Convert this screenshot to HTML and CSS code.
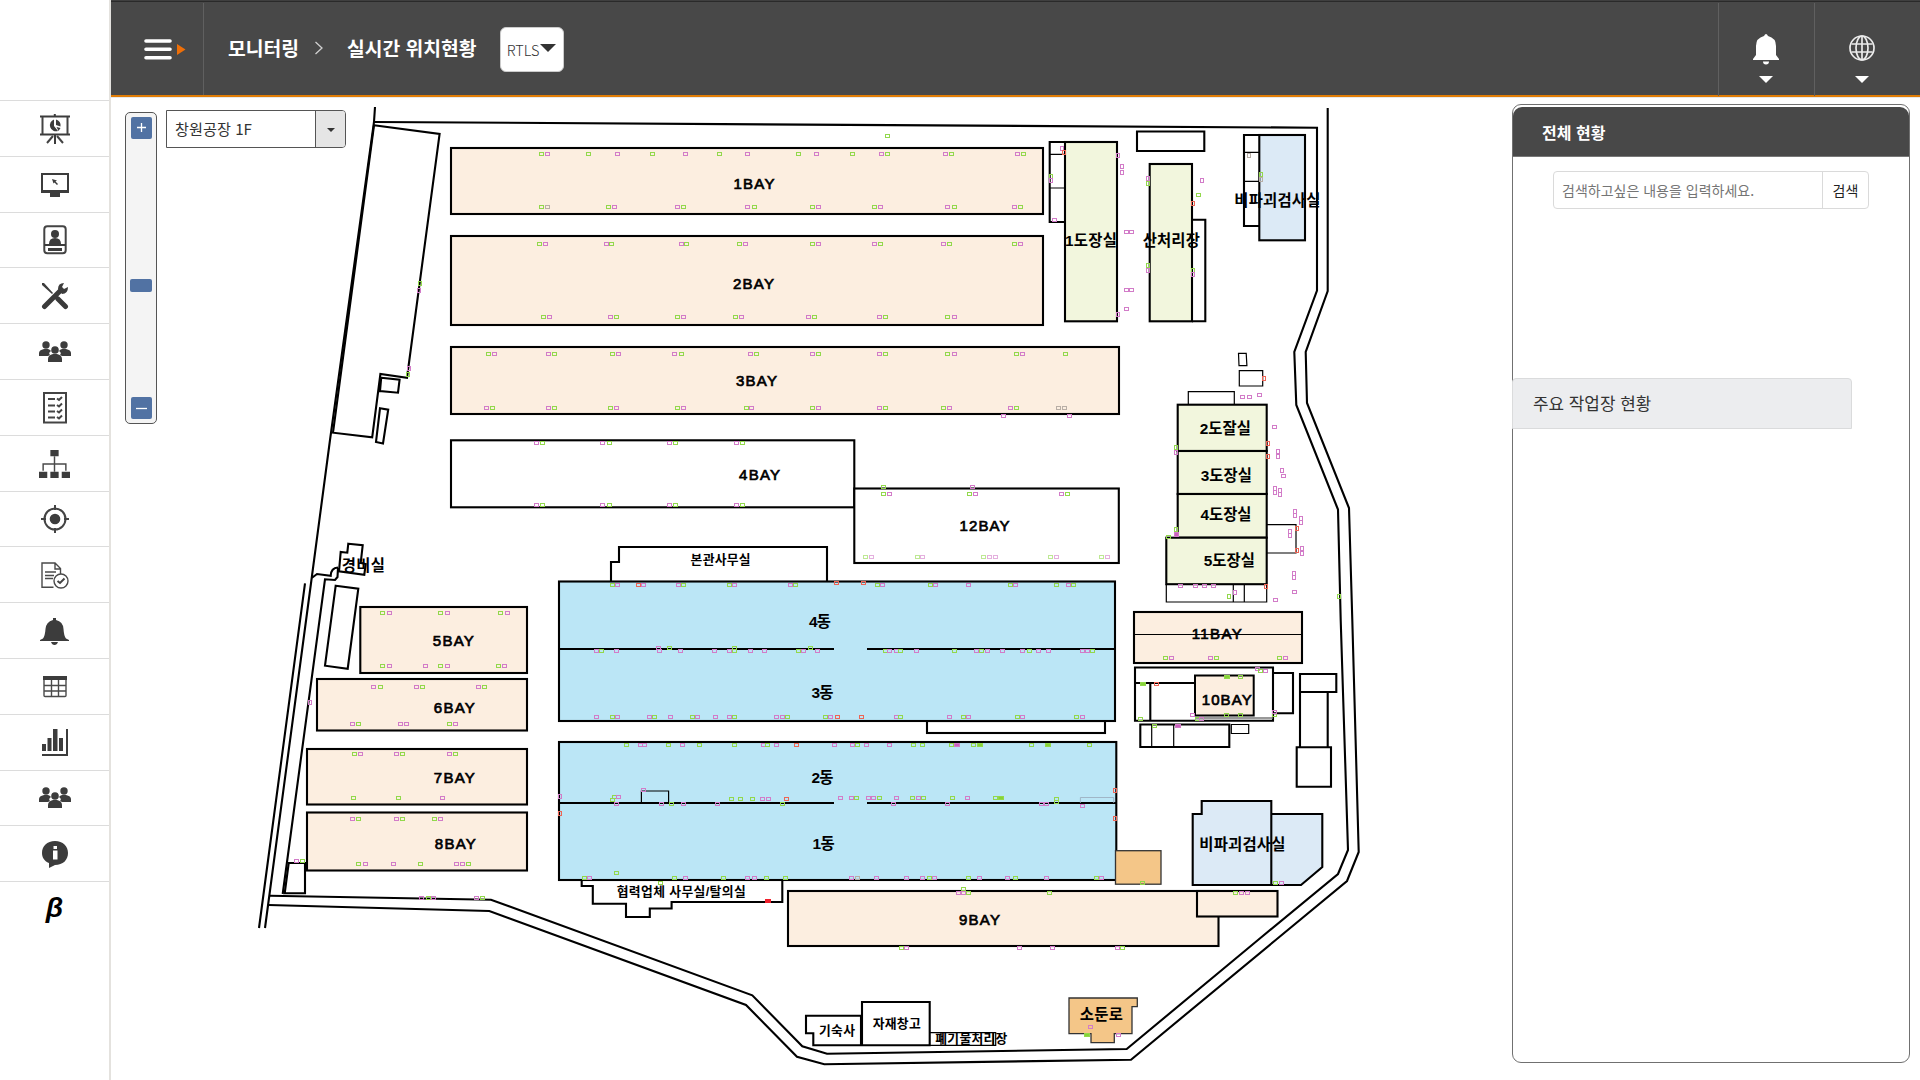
FILE: index.html
```html
<!DOCTYPE html>
<html lang="ko">
<head>
<meta charset="utf-8">
<title>실시간 위치현황</title>
<link rel="stylesheet" href="styles.css">
</head>
<body>
<svg class="defs" aria-hidden="true">
  <symbol id="people" viewBox="0 0 32 22">
    <circle cx="7" cy="4" r="3.7"/><circle cx="25" cy="4" r="3.7"/>
    <path d="M0 15v-3q0-3 5-4h4q2 .6 3 2q-3 2-1 4l-2 1zM32 15v-3q0-3-5-4h-4q-2 .6-3 2q3 2 1 4l2 1z"/>
    <circle cx="16" cy="9" r="3.8"/><path d="M9 21v-3q0-4 5-5h4q5 1 5 5v3z"/>
  </symbol>
</svg>
<nav class="side">
  <div class="logo"></div>
  <a class="item"><svg class="ic" viewBox="0 0 30 30" width="30" height="30"><path d="M0 1.500h30v2H0zM0 19.500h30v2H0zM13.800 0h2v2h-2zM14 21h2v9h-2z"/><path class="ln" d="M2.500 3v17M27.500 3v17M13 22l-6 7M17 22l6 7"/><path d="M14 5.500v6.500l4 5a6 6 0 1 1-4-11.500zM16 5.500a6 6 0 0 1 4.500 7l-4.500-1.500zM16.500 13l4 1-2 3z"/></svg></a>
  <a class="item"><svg class="ic" viewBox="0 0 28 24" width="28" height="24"><path fill-rule="evenodd" d="M0 0h28v20H19v4H9v-4H0zM2 2v15h24V2z"/><path d="M11 6l5 1.500-1.500 1 2.500 2.500-1 1-2.500-2.500-1 1z"/></svg></a>
  <a class="item"><svg class="ic" viewBox="0 0 24 30" width="24" height="30"><rect class="ln" x="1.300" y="1.300" width="21.400" height="27" rx="3"/><circle cx="12" cy="9" r="4"/><path d="M6 19q0-6 6-6t6 6zM1 19h22v2H1zM5 23h14v3H5z"/></svg></a>
  <a class="item"><svg class="ic" viewBox="0 0 28 28" width="28" height="28"><path d="M1 1l2 0 9 10-1 1L1 3z"/><path class="fat" d="M3.500 24.500L20 8M17 17l7.500 7.500"/><path d="M17 7q0-6 6-6l-2 4 2 2 4-2q0 7-6 7z"/></svg></a>
  <a class="item"><svg class="ic" width="32" height="22"><use href="#people"/></svg></a>
  <a class="item"><svg class="ic" viewBox="0 0 24 32" width="24" height="32"><rect class="ln" x="1" y="1" width="22" height="29.500"/><path class="ln" d="M5 7h7M5 13.500h7M5 19.500h7M5 25.500h7M14 6.500l2 1.500 3-3M14 13l2 1.500 3-3M14 19l2 1.500 3-3M14 25l2 1.500 3-3"/></svg></a>
  <a class="item"><svg class="ic" viewBox="0 0 30 27" width="31" height="28"><path d="M11 0h8v6h-8zM0 21h8v6H0zM11 21h8v6h-8zM22 21h8v6h-8z"/><path class="thin" d="M15 6v15M4 20v-6.500h22V20"/></svg></a>
  <a class="item"><svg class="ic" viewBox="0 0 28 28" width="28" height="28"><circle class="ln" cx="14" cy="14" r="10.500"/><circle cx="14" cy="14" r="5.300"/><path class="ln" d="M14 0v5M14 23v5M0 14h5M23 14h5"/></svg></a>
  <a class="item"><svg class="ic" viewBox="0 0 28 27" width="28" height="27"><path class="thin" d="M12.500 25.300H1V1h13l5.500 5.500V12M14 1v6h5.500M4 10h11M4 13.500h9M4 16.500h8"/><circle class="thin" cx="20" cy="19" r="7"/><path class="ln" d="M16.500 19l2.500 2 4.500-4.500"/></svg></a>
  <a class="item"><svg class="ic" viewBox="0 0 29 27" width="29" height="27"><path d="M13 0h3v2q7 1.500 7.500 9t2.500 9.500l3 1.500v1H0v-1l3-1.500Q5 18 5.500 11T13 2zM11 24h7q-1 3-3.500 3T11 24z"/></svg></a>
  <a class="item"><svg class="ic" viewBox="0 0 24 22" width="24" height="22"><rect class="thin" x="1" y="1" width="22" height="19.500" rx="1"/><path d="M0 0h24v4H0z"/><path class="thin" d="M1 9.500h22M1 15h22M8.500 4v17M15.500 4v17"/></svg></a>
  <a class="item"><svg class="ic" viewBox="0 0 26 27" width="26" height="27"><path d="M0 15h4v7H0zM5.500 9h4v13h-4zM11 0h4.500v22H11zM17 9h4v13h-4zM24 0h2v27H0v-2h24z"/></svg></a>
  <a class="item"><svg class="ic" width="32" height="22"><use href="#people"/></svg></a>
  <a class="item"><svg class="ic" viewBox="0 0 26 27" width="26" height="27"><path fill-rule="evenodd" d="M13 0c8 0 13 5 13 12s-5 12-13 12l-6 3v-5C2 20 0 16 0 12 0 5 5 0 13 0zM11.500 5v3h3.500V5zM11 9.500v9h4.500v-9z"/></svg></a>
  <a class="item last"><span class="beta">β</span></a>
</nav>
<div class="page">
  <header class="top">
    <div class="burger"><svg viewBox="0 0 42 22" width="42" height="22"><path d="M2 2h24M2 10.300h24M2 18.700h24" stroke="#fff" stroke-width="3.600" stroke-linecap="round"/><path d="M33 5l8.500 5.500L33 16z" fill="#ee6f08"/></svg></div>
    <h1 class="crumb">모니터링</h1>
    <svg class="chev" viewBox="0 0 10 14" width="10" height="14"><path d="M1.500 1L8 7l-6.500 6" fill="none" stroke="#d0d0d0" stroke-width="1.300"/></svg>
    <h1 class="crumb second">실시간 위치현황</h1>
    <button class="rtls">RTLS<i class="tri"></i></button>
    <div class="tool push"><svg viewBox="0 0 26 31" width="26" height="31"><path fill="#fff" d="M11 2q2-4 4 0 8 2 8 10v9l3 4v1H0v-1l3-4v-9Q3 4 11 2zM10 27.500h6q0 3-3 3t-3-3z"/></svg><i class="down"></i></div>
    <div class="tool"><svg viewBox="0 0 26 31" width="26" height="31"><g fill="none" stroke="#ececec" stroke-width="1.700"><circle cx="13" cy="14" r="12"/><ellipse cx="13" cy="14" rx="6" ry="12"/><path d="M13 2v24M2.500 10h21M2.500 18h21"/></g></svg><i class="down"></i></div>
  </header>
  <main class="work">
    <section class="mapbox">
      <svg class="map" viewBox="111 98 1401 982" width="1401" height="982">
        <g class="road">
          <path d="M1327.700 108V291L1305.700 352 1307 403 1349 508 1352.300 620 1358.700 852 1347 881 1275.700 940 1131 1059.700 824.300 1064.300 797 1056.700 746 1005 489.300 911 268.700 905"/>
          <path d="M374 122L1317 127.700V290.500L1294.300 352 1296.300 405 1338 509.500 1340.700 620 1348 850 1338 874 1258 940 1126.700 1049 827 1053.700 802.300 1046.300 752.300 995.300 491 899.700 270 895.700"/>
          <path d="M375 107L374 122 330 440 311.700 578 265 928M305 583.300L259 928M311.700 578L317 574 330.700 575.700Q331 568 338 567.500M338 568L337.500 577 335 580 325 579.300 282.700 894"/>
          <path d="M374 125.300L439.600 134 407 377.700 380.400 374 372.200 437.300 333 432.700zM381.200 377.700L399.600 379.700 398 392.700 380 391zM380 408.300L388.200 409.700 383 443.500 376 442z"/>
          <path d="M348.300 543.700L362.700 545.300 360.700 563 365.700 564 364.300 574.700 339 571.300 340.700 552 347.300 552.700zM335.700 585.700L358.300 588.700 347.700 668.700 325 665.700zM288.700 863H305V893.300H284.700z"/>
        </g>
        <g class="bay">
          <rect x="451" y="148" width="592" height="66"/><rect x="451" y="236" width="592" height="89"/><rect x="451" y="347" width="668" height="67"/>
          <rect x="360.300" y="607" width="166.700" height="66"/><rect x="317" y="679" width="210" height="51.500"/><rect x="307" y="749" width="220" height="55.500"/><rect x="307" y="812.500" width="220" height="58"/>
          <rect x="788" y="891" width="430.500" height="55"/><rect x="1197" y="891" width="80.500" height="25.500"/>
          <rect x="1134" y="612" width="168" height="51"/><path class="s1" d="M1134 634.500H1302"/>
        </g>
        <g class="plain">
          <rect x="451" y="440.300" width="403.300" height="67"/><rect x="854.300" y="488.500" width="264.500" height="74.500"/>
          <path d="M611 581V562H619V547H827V581"/><rect x="927" y="721" width="178" height="12"/>
          <path d="M581.700 881V886H592.800V903.700H626V917H649.800V908.500H671.600V902H782.300V881"/>
          <path d="M1065 142H1049.700V222H1065M1137 131.500H1204.300V151H1137zM1192 219.700H1205.300V321.300H1192M1259 135H1244V226H1259"/>
          <path d="M1135 667.500H1273V720.700H1135zM1135 683H1195M1150.300 683V720M1273 673H1293V713.300H1273M1140.300 724.500H1229.300V747H1140.300z"/>
          <path d="M1300 674H1336.300V692H1300zM1300 692V747.300M1327.700 692V747.300M1296.700 747.300H1331V786.700H1296.700z"/>
          <path d="M806 1015.700H861V1045.300H813.300V1033.300H806zM862 1002H929.700V1045.300H862z"/>
          <path class="s1" d="M1050 154.300H1065M1050 188H1065M1244 152.300H1259M1244 181.300H1259M1166.300 584V602H1266.700V584M1233.300 584V602M1244.300 584V602M1188.300 404V391.700H1234.300V404M1267 524.700H1296V553H1267M1239.300 370.700H1262.700V386H1239.300zM1238.500 353.300H1246.200L1246.900 365.700H1239zM1151.700 725V747M1173.700 725V747M1231.300 724.500H1248.700V733.500H1231.300zM930 1032.700H995.700V1045.300H930M993.500 1033V1045M941 1033V1045"/>
        </g>
        <g class="hall">
          <rect x="559" y="581.500" width="556" height="139.500"/><path d="M559 649H834M867 649H1115"/>
          <rect x="559" y="742" width="557.300" height="138"/><path d="M559 803H834M867 803H1116"/>
          <path class="s1" d="M641.400 803V791H668.600V803"/><path class="faint" d="M1080.400 803V797.500H1113.700V803"/>
        </g>
        <g class="paint">
          <rect x="1065" y="142" width="52" height="179.300"/><rect x="1149.700" y="164" width="42.300" height="157.300"/>
          <rect x="1177.700" y="404.700" width="89" height="46.300"/><rect x="1177.700" y="451" width="89" height="43"/><rect x="1177.700" y="494" width="89" height="43.700"/><rect x="1166.300" y="537.700" width="100.400" height="46.500"/>
        </g>
        <g class="ndt">
          <rect x="1259.300" y="135" width="45.700" height="105.300"/>
          <path d="M1271.300 814H1322.300V867L1301 885H1271.300zM1192.700 814H1201.700V801H1271.300V885H1192.700z"/>
        </g>
        <rect class="bayfill" x="1195" y="675.500" width="58.700" height="40"/><path class="under" d="M1196 718H1273"/>
        <g class="kiln"><rect x="1115.500" y="850.700" width="45.500" height="33.500"/><path d="M1069 998H1137.300V1006.700H1132V1033.700H1114.300V1042.700H1091V1033.700H1069z"/></g>
        <g class="label">
          <g class="code"><text x="754" y="188.900" textLength="41">1BAY</text><text x="753.400" y="288.700" textLength="41">2BAY</text><text x="756.400" y="386" textLength="41">3BAY</text><text x="759.600" y="480.300" textLength="41">4BAY</text><text x="984.500" y="531.200" textLength="50">12BAY</text>
          <text x="453.300" y="646" textLength="41">5BAY</text><text x="454.300" y="713" textLength="41">6BAY</text><text x="454.300" y="782.600" textLength="41">7BAY</text><text x="455.300" y="849" textLength="41">8BAY</text><text x="979.400" y="924.600" textLength="41">9BAY</text><text x="1226.700" y="704.800" textLength="50">10BAY</text><text x="1216.700" y="639.400" textLength="50">11BAY</text></g>
          <text x="820" y="627.300" textLength="22">4동</text><text x="822.400" y="698" textLength="22">3동</text><text x="822.400" y="783" textLength="22">2동</text><text x="823.600" y="849.200" textLength="22">1동</text>
          <text x="1091" y="245.600" textLength="52">1도장실</text><text x="1171.300" y="245.600" textLength="57">산처리장</text><text x="1277.300" y="206" textLength="86">비파괴검사실</text><text x="1242.300" y="850" textLength="86">비파괴검사실</text>
          <text x="1225.300" y="433.500" textLength="51">2도잘실</text><text x="1226.300" y="480.500" textLength="51">3도장실</text><text x="1226" y="520" textLength="51">4도장실</text><text x="1229.300" y="565.500" textLength="51">5도장실</text>
          <text x="363.300" y="571.400" textLength="43">경비실</text><text x="1101.300" y="1020" textLength="43">소둔로</text>
          <g class="small"><text x="720.600" y="564" textLength="60">본관사무실</text><text x="681.200" y="896.400" textLength="129">협력업체 사무실/탈의실</text><text x="837" y="1034.500" textLength="36">기숙사</text><text x="896.700" y="1028" textLength="48">자재창고</text><text x="971.300" y="1043" textLength="72">폐기물처리장</text></g>
        </g>
        <g id="tags" class="tags"></g>
      </svg>
      <div class="zoom"><button class="zb"><svg viewBox="0 0 21 22" width="21" height="22"><path d="M6 10.500h9M10.500 6v9"/></svg></button><i class="knob"></i><button class="zb"><svg viewBox="0 0 21 22" width="21" height="22"><path d="M5 11.500h11"/></svg></button></div>
      <div class="floor"><span class="name">창원공장 1F</span><span class="drop"><i class="caret"></i></span></div>
    </section>
    <aside class="panel">
      <h2 class="ptitle">전체 현황</h2>
      <div class="search"><span class="hint">검색하고싶은 내용을 입력하세요.</span><button class="go">검색</button></div>
      <h3 class="card">주요 작업장 현황</h3>
    </aside>
  </main>
</div>
<script src="tags.js"></script>
</body>
</html>
```
FILE: styles.css
```css
* { box-sizing: border-box; }
body { margin: 0; width: 1920px; height: 1080px; overflow: hidden; display: flex; background: #fff; color: #333; font-family: "Noto Sans CJK KR", sans-serif; }
button { font: inherit; padding: 0; }
i { display: block; }
.defs { position: absolute; width: 0; height: 0; }

.side { width: 111px; flex: none; border-right: 2px solid #e4e2de; display: flex; flex-direction: column; }
.logo { height: 101px; flex: none; border-bottom: 1px solid #dcdcdc; }
.item { height: 55.8px; flex: none; display: flex; align-items: center; justify-content: center; border-bottom: 1px solid #dcdcdc; padding-top: 1px; }
.item.last { border-bottom: 0; padding: 0 0 4px; }
.ic { display: block; fill: #3c3c3c; }
.ic .ln { fill: none; stroke: #444; stroke-width: 2; }
.ic .thin { fill: none; stroke: #4a4a4a; stroke-width: 1.4; }
.ic .fat { fill: none; stroke: #3a3a3a; stroke-width: 5; stroke-linecap: round; }
.beta { font: italic bold 28px/30px "Liberation Sans", sans-serif; color: #000; }

.page { flex: 1; display: flex; flex-direction: column; }
.top { height: 98px; flex: none; background: #484848; border-top: 1px solid #3f3f3f; box-shadow: inset 0 1px #2a2a2a, inset 0 -1px #e8e8e8, inset 0 -3px #e07c05; display: flex; align-items: center; padding-bottom: 3px; }
.burger { width: 93px; height: 92px; margin-top: 2px; padding: 2px 0 0 33px; border-right: 1px solid #606060; display: flex; align-items: center; }
.crumb { margin: 0 0 0 24px; font-size: 19.3px; line-height: 28px; font-weight: 700; color: #fff; white-space: nowrap; }
.crumb.second { margin-left: 23px; }
.chev { margin-left: 15px; }
.rtls { margin-left: 23px; margin-top: 2px; width: 64px; height: 45px; border: 1px solid #ccc; border-radius: 6px; background: #fff; color: #333; font: 300 14.5px "Noto Sans CJK KR", sans-serif; display: flex; align-items: center; justify-content: center; }
.tri { border: 8px solid transparent; border-top: 8px solid #333; border-bottom: 0; margin: -3px 0 0 1px; }
.tool { width: 96px; height: 93px; margin-top: 2px; border-left: 1px solid #606060; display: flex; flex-direction: column; align-items: center; padding: 31px 2px 0 0; }
.tool:last-child { width: 106px; padding-right: 12px; }
.push { margin-left: auto; }
.down { border: 7px solid transparent; border-top-color: #fff; border-bottom: 0; margin-top: 11px; }

.work { flex: 1; display: flex; }
.mapbox { position: relative; width: 1401px; flex: none; }
.map { display: block; }
.map g { stroke: #000; stroke-width: 2.1; fill: none; }
.map .s1 { stroke-width: 1.2; }
.map .bay, .bayfill { fill: #fceee0; }
.map .bayfill { stroke: #000; stroke-width: 2; }
.under { stroke: #777; stroke-width: 1.5; }
.map .plain { fill: #fff; }
.map .plain .s1 { fill: none; }
.map .hall { fill: #bbe6f6; }
.map .hall .s1, .map .hall .faint { fill: none; }
.map .faint { stroke: #9ab; stroke-width: .8; }
.map .paint { fill: #f2f6dd; }
.map .ndt { fill: #dceaf6; }
.map .kiln { fill: #f4c688; stroke: #333; stroke-width: 1.3; }
.map .label, .map .small { fill: #000; stroke: none; }
.label { font: bold 15.4px "Liberation Sans", "Noto Sans CJK KR", sans-serif; text-anchor: middle; }
.map .code { fill: #000; stroke: #000; stroke-width: .7; font-weight: 400; font-size: 15px; }
.small { font-size: 12.8px; }
.map .tags { stroke-width: 1; }
.tags .g { stroke: #92d84c; }
.tags .p { stroke: #d27cc8; }
.tags .r { stroke: #ee6555; }
.tags .x { stroke: #b8aea6; }
.tags .soft { opacity: .6; }
.tags .on.g { fill: #86d436; }
.tags .on.p { fill: #cb62be; }
.tags .on.r { fill: #f0202c; stroke: #f0202c; }

.zoom { position: absolute; left: 14px; top: 14px; width: 32px; height: 312px; border: 1px solid #555; border-radius: 5px; background: #f4f4f4; display: flex; flex-direction: column; align-items: center; justify-content: space-between; padding: 4px 0; }
.zb { width: 21px; height: 22px; border: 0; border-radius: 2px; background: #5172a3; }
.zb svg { display: block; stroke: #fff; stroke-width: 1.3; }
.knob { width: 22px; height: 13px; border-radius: 2px; background: #5172a3; margin-top: 35px; }
.floor { position: absolute; left: 55px; top: 12px; width: 180px; height: 38px; border: 1px solid #555; border-radius: 0 4px 4px 0; background: #fff; display: flex; font-size: 15.2px; line-height: 35px; overflow: hidden; }
.name { flex: 1; padding-left: 8px; }
.drop { width: 30px; border-left: 1px solid #555; background: #e5e5e5; display: flex; align-items: center; justify-content: center; }
.caret { border: 4px solid transparent; border-top-color: #333; border-bottom: 0; margin-top: 2px; }

.panel { width: 398px; height: 959px; margin-top: 6px; border: 1px solid #707070; border-radius: 9px; padding-top: 2px; }
.ptitle { margin: 0; height: 50px; padding-left: 29px; background: #484848; border-radius: 9px 9px 0 0; border-bottom: 1px solid #777; color: #fff; font-size: 16px; line-height: 50px; font-weight: 700; }
.search { margin: 14px 0 0 40px; width: 316px; height: 38px; border: 1px solid #dadada; border-radius: 4px; display: flex; font-size: 14px; line-height: 36px; }
.hint { flex: 1; padding-left: 8px; color: #757575; white-space: nowrap; }
.go { width: 46px; border: 0; border-left: 1px solid #dadada; background: none; color: #222; }
.card { margin: 169px 0 0 -1px; width: 340px; height: 51px; padding-left: 20px; border: 1px solid #dadbdc; border-radius: 4px 4px 0 0; background: #ecedef; font-size: 16.9px; line-height: 47px; font-weight: 400; color: #333; }
```
FILE: tags.js
```javascript
// Sensor tags on the floor plan. Each row is "y: kind+x ...".
// Kinds: g, p, r, x are outline colours; capital letters are active (filled) tags.
const flat = `
136: g887
154: g541.6 p547.4 g588 p617 g652.3 p685.8 g719.3 p747.9 g798.8 p816.6 g852.3 p881.3 g887 p945.6 g951.9 p1017 g1023
207.3: g541.6 x547.4 g608.6 p614.8 p677.3 g683 p747.9 g754 g812 p818.4 g874.6 p880.9 p947.9 g954 p1014.4 g1020
244.3: g539.4 p545 p606 g611.7 p681 g686.7 g739.4 p745 g812 p818.4 p874.6 g880.9 p943.4 g949.2 g1014.4 p1020
316.7: g543.8 p549.6 p610.4 g616 g677.3 p683 g735 p741 p808 g814.4 p879 g885.4 g947.9 p954
353.7: g488.5 p494.3 p548.3 g554.6 g612.6 p618.8 p674.6 g681 p750.5 g756.3 p812 g818.4 p879 g885.4 g947.9 p954 g1016.6 p1022.9 g1065.3
407.6: p486.3 g492 p548.3 g554.6 g610.4 p616 g677.3 p683 g746 p751.9 g812 p818.4 p879 g885.4 g943.4 p949.2 p1010 g1016 x1058.6 x1064.4
416: p1003 p1069.7
442.7: p536.3 g542.5 p602.8 g609 p669.7 g675.5 p736.3 g742.5
504.7: p536.3 g542.5 p602.8 g609 p669.7 g675.5 p736.3 g742.5
486.7: g883 p972.9
494: g883 p889.4 g969.7 p975.5 p1061 g1067
585.3: g612 p617 r638.3 p643.3 p678.5 g683.5 g729.4 p734.4 p790.3 g795.3 g877 p882.5 g930.3 p935.3 p968.6 g1010.3 p1015.3 g1056.3 p1068.5 g1073.5
583: r836.6 r863.4
651: p596.6 g601.6 p616 p659.4 p680 p714 p729.4 g734.4 p750 p764.6 g798.7 p803.3 p817 g885 p889.8 p896.3 g900.9 p916.6 g954 p976.7 g981.6 p987.4 p1002.3 p1022 g1029.5 p1038.7 p1048 p1082.3 p1087.3 g1092.2
647.7: p658.3 g669.7 g734 g810
717: p596.6 g612 p617 p649.8 g654.4 p670.5 g692.3 p697.3 p715.3 p729.4 g734.4 p776.5 p782.6 g787.6 g825 p830 r837.7 r861.5 p896.3 g900.9 p949.5 g963.6 p968.6 g1017 p1022 g1076.5 p1082.3
744.7: g626.5 p640.3 p644.9 g668.2 p682.4 g699.6 g734.4 p763 g767.7 p776 r796.4 p834.3 p852.7 g857.6 p866.8 p889.8 g913.9 g922.3 g951 P956 g973 G979 g1031.8 G1047.8 g1089
797: g614.2 p618.8
800: g612.7
789.7: p643.7
798.7: g731.7 g740 g752.8 p762.3 p768.5 r786.5 g1056.3
797.7: p840.8 p851.5 g856.5 p868.4 p873.7 g879 p896.3 g912.4 p918.5 g923.5 g952.6 p967.5 g995.4 G1000
804: p616 p661.3 g671.3 p683 p717.2 g782.2 p893.2 p947.2 p1041.3 p1046.7
802.3: g1056.3
805.7: p1082
873.3: g616
877.7: g584.8 p589.4 g674.3 p685.8 g723.3 p747.8 p754.7 g766.2 g785.3 p851.5 x857 p876.4 p906.6 p922 g929.6 p934.6 g968.2 p979 p1007.3 g1015.3 p1046.3 g1096.4 p1101.8
883.3: g660
900.7: R767
888.7: g963
892.7: p958 p963 g968 g1049.4 g1235.7 p1241.7 p1247
948: g901.3 p906.3 p1019.7 p1052.7 p1117.7 g1122.7
657.7: g1165.7 p1171.3 p1210.3 g1216 g1279.3 p1285.3
684: G1142 r1156.3
676.5: G1226.3 g1240.3
715.3: g1226.7 g1240.3 p1192.3 g1274.3
719: g1197.3 p1201.7 g1140.3
668.7: p1257
671.3: g1260.3 p1265
711.7: p1274.3
726.3: g1154.7 P1177.7
883: g1275.3 p1281.3 g1142.3
397: p1242.7 p1249
395.3: p1259.3
427.3: p1274.3
475.7: p1283.3
591.7: p1294.3
600: p1275.7
586: p1180.3 p1195.3 p1204 p1213
537.3: g1168
220: p1054.3
231.7: p1126.3 p1131
290.3: p1126.3 p1131
309: p1126.3
195.3: g1198.3
612.5: g382.7 p389.3 g440.3 p447 g500.3 p507
666: g382.7 p389.3 p425.3 g440.3 p447 g498.3 p504.7
687: p373.7 g380.3 p416.3 g422.3 p478 g484.3
723.6: p352 g358 p400.3 p406.3 g449.7 p455.3
754: g354 p360 p396.3 g402.3 p449.7 g455.7
798.3: g353.7 g398.3 p442.7
819: p352 g358 p396.3 g402.3 g434 p440
863.6: g358.7 p365 p393.3 g420.3 p456.3 p462.3 g468.3
861: p296.3 g302.3
897.6: p421.7 g428.3 p433.7 p476 g482
1026.7: p1090.7
1035.3: G1086 p1118.3`;
const faded = `
556.7: g865.7 p871.5 g917 p922.9 g983 p989.4 p995 g1050 p1056.3 g1101.4 p1107`;
const upright = `
148: p1061.7
152.3: r1064.3
155.3: p1118 x1249.3
166.3: p1122
172.3: p1122
176.3: g1050.7
180.7: p1050.7 p1201.7
178.3: p1148.3
183.3: g1148.3
203.7: r1192.7
265.3: g1148.3
270: p1148.3 g1193
274.3: p1193
174.3: g1261.3
179: x1261.3
314: p1118
378.3: r1263.7
443.7: r1267.7
456.3: r1268.3 p1278
451.7: p1278
470.7: p1282.3
488.5: p1275
492.7: p1275
490.7: p1279.7
494.8: p1279.7
511: p1295
515.3: p1295
518.5: p1301.3
522.7: p1301.3
528: r1297.3
550.7: r1297.3
531: p1290.3
535.3: p1290.3
548.7: p1302.3
553: p1302.3
573.3: p1294.3
577.5: p1294.3
596.3: g1229.3 g1338.7
592.3: p1235
586.7: r1265.7
447.7: g1175.7
452.3: p1175.7
529.3: g1175.7
534.3: P1175.7
796: p559.5
813.3: r560
790: r1115
818: r1115
702.7: p310.3
283.7: g420.4
290.3: p419
368.7: p408.6
374.7: g407.8`;

const layer = document.getElementById('tags');
function draw(rows, w, h, extra) {
  for (const row of rows.trim().split('\n')) {
    const [y, list] = row.split(': ');
    for (const tag of list.split(' ')) {
      const kind = tag[0].toLowerCase();
      const x = parseFloat(tag.slice(1));
      const r = document.createElementNS('http://www.w3.org/2000/svg', 'rect');
      const active = tag[0] !== kind;
      r.setAttribute('x', Math.round(x - w / 2 - 0.5) + 0.5);
      r.setAttribute('y', Math.round(y - h / 2 - 0.5) + 0.5);
      r.setAttribute('width', active ? w + 1 : w);
      r.setAttribute('height', h);
      r.setAttribute('class', kind + (active ? ' on' : '') + extra);
      layer.appendChild(r);
    }
  }
}
draw(flat, 4, 3, '');
draw(faded, 4, 3, ' soft');
draw(upright, 3, 4, '');
```
